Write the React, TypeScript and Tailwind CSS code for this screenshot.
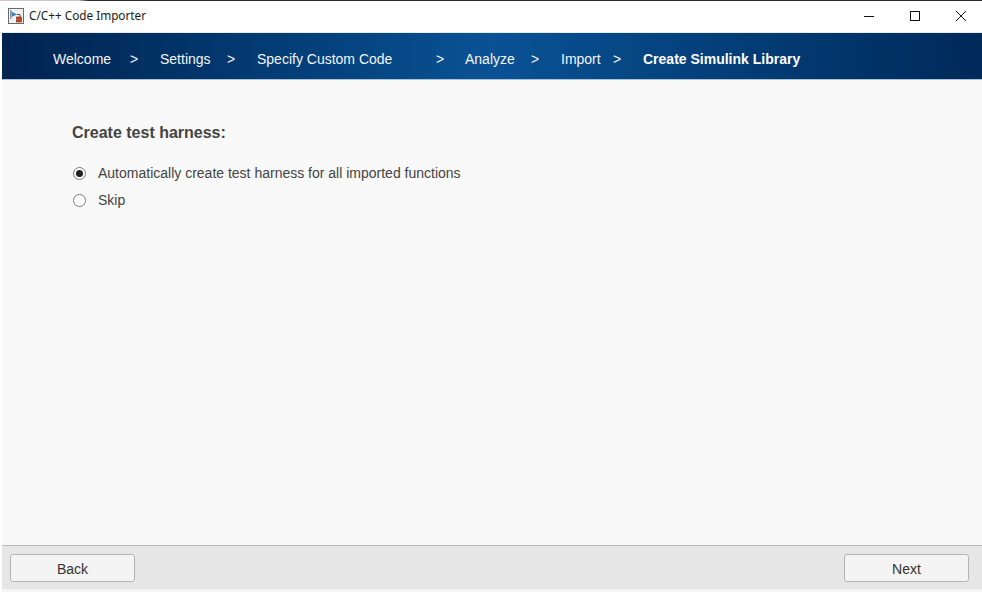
const steps = [
  { label: "Welcome", width: "w-[77px]" },
  { label: ">", width: "w-[30px]" },
  { label: "Settings", width: "w-[67px]" },
  { label: ">", width: "w-[30px]" },
  { label: "Specify Custom Code", width: "w-[179px]" },
  { label: ">", width: "w-[29px]" },
  { label: "Analyze", width: "w-[66px]" },
  { label: ">", width: "w-[30px]" },
  { label: "Import", width: "w-[52px]" },
  { label: ">", width: "w-[30px]" },
];

function AppIcon() {
  return (
    <svg width="16" height="16" viewBox="0 0 16 16" className="shrink-0">
      <rect x="0.5" y="0.5" width="15" height="15" fill="#f1f1f1" stroke="#6b6b6b" />
      <path d="M2 2h1.5v9H2z" fill="#8a9bb0" />
      <path d="M3.5 3.5 9 6.5 3.5 9z" fill="#3f86b8" />
      <path d="M9 6.5h3V9" fill="none" stroke="#555" />
      <rect x="8.5" y="9" width="5" height="5" fill="#c8472b" stroke="#7c2a18" strokeWidth="0.6" />
    </svg>
  );
}

function Radio({ checked }: { checked?: boolean }) {
  return (
    <span className="flex h-[13px] w-[13px] shrink-0 items-center justify-center rounded-full border border-[#7a7a7a] bg-white">
      {checked && <span className="h-[7px] w-[7px] rounded-full bg-[#222]" />}
    </span>
  );
}

function WizardButton({ label }: { label: string }) {
  return (
    <button className="h-[28px] w-[125px] rounded-[3px] border border-[#b4b4b4] bg-[#f4f4f4] pt-[2px] text-[14px] text-[#333]">
      {label}
    </button>
  );
}

export default function App() {
  return (
    <div className="flex h-[592px] w-[982px] flex-col overflow-hidden bg-white font-['Liberation_Sans',sans-serif]">
      {/* Title bar */}
      <div className="h-px bg-gradient-to-r from-[#c9c9c9] from-[8%] to-[#2a2a2a] to-[9%]" />
      <div className="flex h-[32px] items-center border-b border-[#e4ecf5] pb-[1px] pl-[8px]">
        <AppIcon />
        <span className="ml-[5px] font-['Noto_Sans',sans-serif] text-[11.75px] text-[#1a1a1a]">C/C++ Code Importer</span>
        <div className="ml-auto mb-[1px] flex items-center">
          <svg width="12" height="12" viewBox="0 0 12 12" className="mr-[34px]">
            <path d="M1 6.5h10" stroke="#111" strokeWidth="1" />
          </svg>
          <svg width="12" height="12" viewBox="0 0 12 12" className="mr-[34px]">
            <rect x="1.5" y="1.5" width="9" height="9" fill="none" stroke="#111" />
          </svg>
          <svg width="12" height="12" viewBox="0 0 12 12" className="mr-[15px]">
            <path d="M1 1l10 10M11 1 1 11" stroke="#111" strokeWidth="1" />
          </svg>
        </div>
      </div>

      <div className="flex min-h-0 flex-1 flex-col pl-[2px]">
        {/* Step header */}
        <div className="flex h-[47px] items-center border-b border-[#a9c3df] bg-gradient-to-r from-[#00234f] via-[#0a5295] via-[50%] to-[#002a5a] pl-[51px] pt-[6px] text-[14px] text-[#f2f5f9]">
          {steps.map((step, i) => (
            <span key={i} className={`${step.width} shrink-0`}>
              {step.label}
            </span>
          ))}
          <span className="font-bold text-white">Create Simulink Library</span>
        </div>

        {/* Options */}
        <div className="min-h-0 flex-1 bg-[#f9f9f9] pl-[70px] pt-[44px] text-[#444]">
          <h2 className="text-[16px] leading-[18px] font-bold">Create test harness:</h2>
          <div className="mt-[23px] flex h-[16px] items-center gap-[12px] pl-[1px] text-[14px]">
            <Radio checked />
            <span>Automatically create test harness for all imported functions</span>
          </div>
          <div className="mt-[11px] flex h-[16px] items-center gap-[12px] pl-[1px] text-[14px]">
            <Radio />
            <span>Skip</span>
          </div>
        </div>

        {/* Footer */}
        <div className="flex h-[44px] justify-between border-t border-[#b9b9b9] bg-[#e6e6e6] pl-[8px] pr-[13px] pt-[8px]">
          <WizardButton label="Back" />
          <WizardButton label="Next" />
        </div>
        <div className="h-[3px] bg-[#f4f4f4]" />
      </div>
    </div>
  );
}
